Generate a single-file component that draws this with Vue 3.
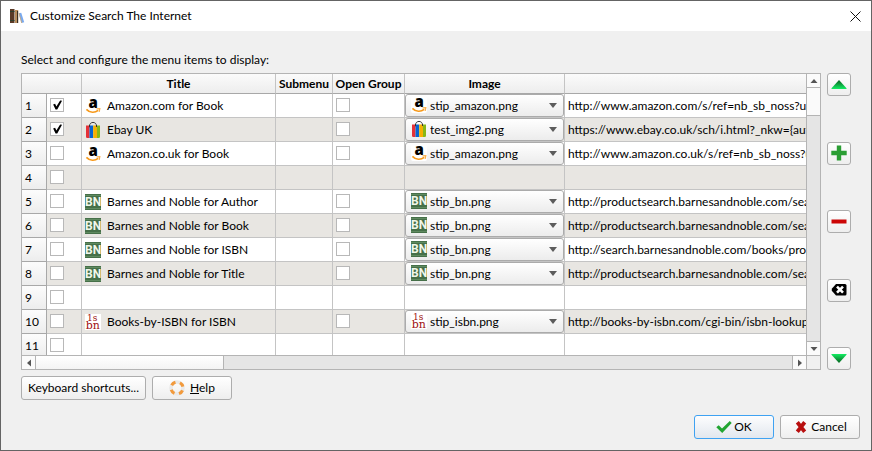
<script setup>
import { h, ref } from 'vue'

const serif = `font-family="DejaVu Serif, serif" fill="#9e1010"`
const bold = `font-family="Roboto, sans-serif" font-weight="700" font-size="12" fill="#f1f7ea"`

// Artwork of each menu image, drawn on a 16 x 16 grid
const artwork = {
  'stip_amazon.png': `
    <rect width="16" height="16" rx="2" fill="#fff"/>
    <text x="3.400" y="9.600" font-family="Open Sans, sans-serif" font-weight="800" font-size="15" fill="#000">a</text>
    <path d="M1.400 11.300C5 15 9.800 15.100 13.200 12.300" fill="none" stroke="#f79a1c" stroke-width="1.700"/>
    <path d="M11.500 10.900L14.800 10.600L14.200 13.900" fill="none" stroke="#f9ae4b" stroke-width="1.200"/>`,
  'test_img2.png': `
    <path d="M4.500 5.500V4C4.500 -0.800 11.500 -0.800 11.500 4V5.500" fill="none" stroke="#3a3a3a" stroke-width="1"/>
    <path d="M1 3.500H4.500V16H2.200Q1 16 1 14.800Z" fill="#e53238"/>
    <path d="M4.500 3.500H8.200V16H4.500Z" fill="#0764d2"/>
    <path d="M8.200 3.500H12V16H8.200Z" fill="#f5af02"/>
    <path d="M12 3.500H15V14.800Q15 16 13.800 16H12Z" fill="#86b817"/>
    <path d="M4.500 3V5M11.500 3V5" stroke="#333" stroke-width="1"/>`,
  'stip_bn.png': `
    <rect width="16" height="16" fill="#467049"/>
    <path d="M0 1.500H16M0 14.500H16" stroke="#5f8a60" stroke-width="1"/>
    <text x="0" y="12.400" ${bold}>B</text>
    <text x="7.700" y="12.400" ${bold}>N</text>`,
  'stip_isbn.png': `
    <rect width="16" height="16" fill="#fff"/>
    <text x="2" y="7" font-size="9" ${serif}>1s</text>
    <text x="0.800" y="15.400" font-size="11" ${serif}>bn</text>`,
}
const images = Object.keys(artwork)

const MenuIcon = (props) =>
  h('svg', { class: 'icon', viewBox: '0 0 16 16', 'aria-hidden': 'true', innerHTML: artwork[props.image] })
MenuIcon.props = ['image']

const rows = ref([
  { on: true, title: 'Amazon.com for Book', group: false, image: 'stip_amazon.png', url: 'http://www.amazon.com/s/ref=nb_sb_noss?url=search-alias' },
  { on: true, title: 'Ebay UK', group: false, image: 'test_img2.png', url: 'https://www.ebay.co.uk/sch/i.html?_nkw={author}+{title}' },
  { on: false, title: 'Amazon.co.uk for Book', group: false, image: 'stip_amazon.png', url: 'http://www.amazon.co.uk/s/ref=nb_sb_noss?url=search-alias' },
  { on: false },
  { on: false, title: 'Barnes and Noble for Author', group: false, image: 'stip_bn.png', url: 'http://productsearch.barnesandnoble.com/search/results' },
  { on: false, title: 'Barnes and Noble for Book', group: false, image: 'stip_bn.png', url: 'http://productsearch.barnesandnoble.com/search/results' },
  { on: false, title: 'Barnes and Noble for ISBN', group: false, image: 'stip_bn.png', url: 'http://search.barnesandnoble.com/books/product.aspx' },
  { on: false, title: 'Barnes and Noble for Title', group: false, image: 'stip_bn.png', url: 'http://productsearch.barnesandnoble.com/search/results' },
  { on: false },
  { on: false, title: 'Books-by-ISBN for ISBN', group: false, image: 'stip_isbn.png', url: 'http://books-by-isbn.com/cgi-bin/isbn-lookup.pl' },
  { on: false },
])
</script>

<template>
  <main class="dialog">
    <header class="titlebar">
      <svg class="icon" viewBox="0 0 16 16" aria-hidden="true">
        <rect x="1" y="1" width="4.500" height="14" fill="#5b3a26" />
        <path d="M1 3.500H5.500M1 12.500H5.500" stroke="#2e3f2c" stroke-width="1.200" />
        <rect x="6" y="2" width="3.200" height="13" fill="#b98d5b" />
        <path d="M8.600 3V15" stroke="#2c2621" stroke-width="1" />
        <path d="M9.800 5.200L12.200 4.700L15.200 14.300L12.500 15Z" fill="#79aaf0" />
        <path d="M10 5.200L12.700 15" stroke="#d0a469" stroke-width="0.800" />
      </svg>
      <h1>Customize Search The Internet</h1>
      <button class="close" type="button" aria-label="Close">
        <svg viewBox="0 0 11 11" aria-hidden="true"><path d="M0.500 0.500L10.500 10.500M10.500 0.500L0.500 10.500" stroke="#111" fill="none" /></svg>
      </button>
    </header>

    <section class="content">
      <p id="intro" class="intro">Select and configure the menu items to display:</p>
      <div class="editor">
        <div class="frame">
          <div class="viewport">
            <table aria-labelledby="intro">
              <colgroup>
                <col class="c-num" /><col class="c-check" /><col class="c-title" /><col class="c-sub" />
                <col class="c-group" /><col class="c-image" /><col />
              </colgroup>
              <thead>
                <tr>
                  <th colspan="2"></th>
                  <th>Title</th>
                  <th>Submenu</th>
                  <th>Open Group</th>
                  <th>Image</th>
                  <th></th>
                </tr>
              </thead>
              <tbody>
                <tr v-for="(row, i) in rows" :key="i">
                  <th scope="row">{{ i + 1 }}</th>
                  <td class="check"><input v-model="row.on" type="checkbox" :aria-label="`Row ${i + 1}`" /></td>
                  <td>
                    <div v-if="row.title" class="title">
                      <MenuIcon :image="row.image" />
                      <span>{{ row.title }}</span>
                    </div>
                  </td>
                  <td></td>
                  <td class="check"><input v-if="row.title" v-model="row.group" type="checkbox" :aria-label="`Open Group ${i + 1}`" /></td>
                  <td>
                    <div v-if="row.image" class="combo">
                      <select v-model="row.image" :aria-label="`Image ${i + 1}`">
                        <option v-for="name in images" :key="name">{{ name }}</option>
                      </select>
                      <MenuIcon class="combo-icon" :image="row.image" />
                      <svg class="combo-arrow" viewBox="0 0 8 5" aria-hidden="true"><path d="M0 0H8L4 5Z" fill="#5c5c5c" /></svg>
                    </div>
                  </td>
                  <td class="url">{{ row.url }}</td>
                </tr>
              </tbody>
            </table>
          </div>
          <div class="vscroll">
            <button type="button" aria-label="Scroll up"><svg viewBox="0 0 8 8" aria-hidden="true"><path d="M0.500 6L4 2L7.500 6Z" fill="#555" /></svg></button>
            <div class="thumb"></div>
            <button class="end" type="button" aria-label="Scroll down"><svg viewBox="0 0 8 8" aria-hidden="true"><path d="M0.500 2L4 6L7.500 2Z" fill="#555" /></svg></button>
          </div>
          <div class="hscroll">
            <button type="button" aria-label="Scroll left"><svg viewBox="0 0 8 8" aria-hidden="true"><path d="M6 0.500L2 4L6 7.500Z" fill="#555" /></svg></button>
            <div class="thumb"></div>
            <button class="end" type="button" aria-label="Scroll right"><svg viewBox="0 0 8 8" aria-hidden="true"><path d="M2 0.500L6 4L2 7.500Z" fill="#555" /></svg></button>
          </div>
          <div class="corner"></div>
        </div>

        <div class="tools">
          <button class="btn" type="button" aria-label="Move row up">
            <svg class="icon" viewBox="0 0 16 16" aria-hidden="true">
              <linearGradient id="grad-up" x1="0" y1="0" x2="0" y2="1">
                <stop offset="0.2" stop-color="#0b7a2c" />
                <stop offset="1" stop-color="#12ee62" />
              </linearGradient>
              <path d="M8 3L15.500 11.200V12H0.500V11.200Z" fill="url(#grad-up)" />
            </svg>
          </button>
          <button class="btn" type="button" aria-label="Add row">
            <svg class="icon" viewBox="0 0 16 16" aria-hidden="true"><path d="M5.800 0.500H10.200V5.800H15.700V10.200H10.200V15.500H5.800V10.200H0.300V5.800H5.800Z" fill="#2b9e34" /></svg>
          </button>
          <button class="btn" type="button" aria-label="Delete row">
            <svg class="icon" viewBox="0 0 16 16" aria-hidden="true"><rect x="0.500" y="5.500" width="15" height="4" fill="#cc0606" /></svg>
          </button>
          <button class="btn" type="button" aria-label="Clear image">
            <svg class="icon" viewBox="0 0 16 16" aria-hidden="true">
              <path d="M5 2H14Q15.500 2 15.500 3.500V12Q15.500 13.500 14 13.500H5L0.800 8.800V6.800Z" fill="#000" />
              <path d="M6 4.700L12 10.700M12 4.700L6 10.700" stroke="#fff" stroke-width="2.600" />
            </svg>
          </button>
          <button class="btn" type="button" aria-label="Move row down">
            <svg class="icon" viewBox="0 0 16 16" aria-hidden="true">
              <linearGradient id="grad-down" x1="0" y1="0" x2="0" y2="1">
                <stop offset="0" stop-color="#12ee62" />
                <stop offset="0.8" stop-color="#0b7a2c" />
              </linearGradient>
              <path d="M0.500 3H15.500V3.800L8 12L0.500 3.800Z" fill="url(#grad-down)" />
            </svg>
          </button>
        </div>
      </div>

      <div class="extras">
        <button class="btn wide" type="button">Keyboard shortcuts...</button>
        <button class="btn" type="button">
          <svg class="icon" viewBox="0 0 16 16" aria-hidden="true">
            <circle cx="8" cy="8" r="6" fill="none" stroke="#e9e9e9" stroke-width="3.600" />
            <circle cx="8" cy="8" r="6" fill="none" stroke="#f29a3c" stroke-width="3" stroke-dasharray="4.700 4.725" stroke-dashoffset="-2.400" />
          </svg>
          <span><u>H</u>elp</span>
        </button>
      </div>
    </section>

    <footer class="actions">
      <button class="btn default" type="button">
        <svg class="icon" viewBox="0 0 16 16" aria-hidden="true"><path d="M0.300 8.200L2.700 6.200L6 9.400L13.800 2L15.700 4L6.200 14Z" fill="#22a532" /></svg>
        <span>OK</span>
      </button>
      <button class="btn cancel" type="button">
        <svg class="icon" viewBox="0 0 16 16" aria-hidden="true"><path d="M4.300 3.300L11.700 12.700M11.700 3.300L4.300 12.700" stroke="#b80f0f" stroke-width="3.800" /></svg>
        <span>Cancel</span>
      </button>
    </footer>
  </main>
</template>

<style>
body {
  margin: 0;
}
</style>

<style scoped>
* {
  box-sizing: border-box;
}
.icon {
  display: block;
  flex: none;
  width: 16px;
  height: 16px;
  overflow: visible;
}
.dialog {
  display: flex;
  flex-direction: column;
  height: 100vh;
  min-height: 360px;
  border: 1px solid #646464;
  background: #f0f0f0;
  color: #000;
  font: 12px/16px Lato, "Open Sans", sans-serif;
}
button,
select {
  margin: 0;
  font: inherit;
  color: inherit;
}
.titlebar {
  display: flex;
  align-items: center;
  gap: 5px;
  height: 30px;
  flex: none;
  padding: 0 10px 0 8px;
  background: #fff;
}
h1 {
  flex: 1;
  margin: 0;
  font-size: 12px;
  font-weight: 400;
}
.close {
  padding: 0;
  border: 0;
  background: none;
}
.close svg {
  display: block;
  width: 11px;
  height: 11px;
}
.content {
  display: flex;
  flex-direction: column;
  flex: 1;
  min-height: 0;
  padding: 21px 20px 0;
}
.intro {
  margin: 0 0 5px;
}
.editor {
  display: flex;
  gap: 6px;
  flex: 1;
  min-height: 0;
}
.frame {
  display: grid;
  grid-template: minmax(0, 1fr) 14px / minmax(0, 1fr) 14px;
  flex: 1;
  min-width: 0;
  border: 1px solid #b4b4b4;
}
.viewport {
  overflow: hidden;
  background: #fff;
}
table {
  width: 100%;
  table-layout: fixed;
  border-collapse: separate;
  border-spacing: 0;
}
.c-num { width: 25px; }
.c-check { width: 35px; }
.c-title { width: 194px; }
.c-sub { width: 57px; }
.c-group { width: 72px; }
.c-image { width: 160px; }
th,
td {
  height: 24px;
  padding: 0;
  overflow: hidden;
  white-space: nowrap;
  border-right: 1px solid #c4c4c4;
  border-bottom: 1px solid #c4c4c4;
}
th:last-child,
td:last-child {
  border-right: 0;
}
thead th {
  height: 20px;
  border-bottom-color: #a8a8a8;
  background: linear-gradient(#fbfbfb, #ededed);
  font-weight: 700;
}
tbody th {
  padding-left: 3px;
  border-color: #a8a8a8;
  border-right: 1px solid #a8a8a8;
  background: linear-gradient(#fcfcfc, #ededed);
  font-weight: 400;
  text-align: left;
}
tbody tr:nth-child(even) {
  background: #e8e6e2;
}
.check {
  padding: 0 0 1px 3px;
}
input {
  display: block;
  appearance: none;
  width: 14px;
  height: 14px;
  margin: 0;
  border: 1px solid #b8b8b8;
  background: #fff;
}
input:checked::before {
  content: "";
  display: block;
  width: 12px;
  height: 12px;
  background: #000;
  clip-path: polygon(18% 46%, 34% 40%, 45% 62%, 76% 12%, 92% 14%, 52% 88%, 38% 88%);
}
.title {
  display: flex;
  align-items: center;
  gap: 6px;
  padding-left: 3px;
}
.combo {
  position: relative;
}
.combo select {
  display: block;
  appearance: none;
  width: 100%;
  height: 23px;
  padding: 0 20px 0 24px;
  border: 1px solid #ababab;
  border-radius: 3px;
  background: linear-gradient(#fff, #ececec);
}
.combo-icon {
  position: absolute;
  left: 6px;
  top: 3px;
  pointer-events: none;
}
.combo-arrow {
  position: absolute;
  right: 7px;
  top: 9px;
  width: 8px;
  height: 5px;
  pointer-events: none;
}
.url {
  padding-left: 3px;
}
.vscroll,
.hscroll {
  display: flex;
  background: #e5e5e5;
}
.vscroll {
  flex-direction: column;
  border-left: 1px solid #b4b4b4;
}
.hscroll {
  border-top: 1px solid #b4b4b4;
}
.vscroll button,
.hscroll button {
  display: grid;
  place-items: center;
  padding: 0;
  border: 0 solid #b4b4b4;
  background: #fbfbfb;
}
.vscroll button {
  height: 14px;
  border-bottom-width: 1px;
}
.hscroll button {
  width: 14px;
  border-right-width: 1px;
}
.vscroll .end {
  margin-top: auto;
  border-width: 1px 0 0;
}
.hscroll .end {
  margin-left: auto;
  border-width: 0 0 0 1px;
}
.vscroll svg,
.hscroll svg {
  display: block;
  width: 8px;
  height: 8px;
}
.vscroll .thumb {
  height: 10%;
  border-bottom: 1px solid #b4b4b4;
  background: #fafafa;
}
.hscroll .thumb {
  width: 24%;
  border-right: 1px solid #b4b4b4;
  background: linear-gradient(#fff, #f4f4f4);
}
.corner {
  border-left: 1px solid #b4b4b4;
  border-top: 1px solid #b4b4b4;
}
.btn {
  display: flex;
  align-items: center;
  justify-content: center;
  gap: 5px;
  width: 80px;
  height: 24px;
  padding: 0;
  border: 1px solid #adadad;
  border-radius: 3px;
  background: linear-gradient(#fff, #eee);
  white-space: nowrap;
}
.tools {
  display: flex;
  flex-direction: column;
  justify-content: space-between;
}
.tools .btn {
  width: 24px;
  height: 23px;
}
.extras {
  display: flex;
  gap: 6px;
  padding-top: 6px;
}
.wide {
  width: 125px;
}
.actions {
  display: flex;
  justify-content: flex-end;
  gap: 6px;
  padding: 15px 11px 11px;
}
.actions .btn {
  gap: 2px;
}
.default {
  border-color: #3fa2f2;
  background: linear-gradient(#fdfdfe, #e2e7ee);
}
</style>
